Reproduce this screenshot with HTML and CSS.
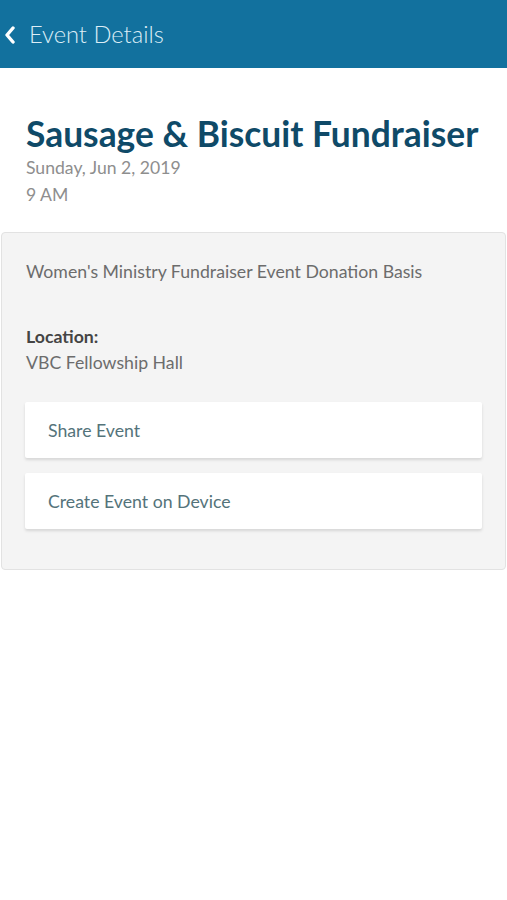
FILE: index.html
```html
<!DOCTYPE html>
<html>
<head>
<meta charset="utf-8">
<link rel="stylesheet" href="styles.css">
</head>
<body>
<header class="topbar">
  <svg class="back" width="12" height="18" viewBox="0 0 12 18"><path d="M9 2 L3 9 L9 16" fill="none" stroke="#ffffff" stroke-width="3.4" stroke-linecap="round" stroke-linejoin="round"/></svg>
  <span class="topbar-title">Event Details</span>
</header>
<section class="intro">
  <h1 class="title">Sausage &amp; Biscuit Fundraiser</h1>
  <div class="meta">Sunday, Jun 2, 2019</div>
  <div class="meta">9 AM</div>
</section>
<section class="card">
  <p class="desc">Women's Ministry Fundraiser Event Donation Basis</p>
  <div class="loc-label">Location:</div>
  <div class="loc">VBC Fellowship Hall</div>
  <div class="actions">
    <div class="action">Share Event</div>
    <div class="action">Create Event on Device</div>
  </div>
</section>
</body>
</html>
```
FILE: styles.css
```css
html, body {
  margin: 0;
  padding: 0;
  background: #ffffff;
  font-family: Lato, "Open Sans", sans-serif;
}
.topbar {
  height: 68px;
  background: #12719e;
  display: flex;
  align-items: center;
  padding-left: 4px;
  gap: 13px;
  box-sizing: border-box;
}
.back {
  display: block;
  margin-top: 2px;
}
.topbar-title {
  color: #dcedf6;
  font-size: 23.7px;
  font-weight: 300;
}
.intro {
  padding: 46px 26px 0 26px;
}
.title {
  margin: 0;
  font-size: 35.4px;
  font-weight: 700;
  color: #0f4a68;
  line-height: 40px;
}
.meta {
  font-size: 17.6px;
  color: #8e8e8e;
  line-height: 27px;
  font-weight: 400;
}
.card {
  margin: 24px 1px 0 1px;
  background: #f4f4f4;
  border: 1px solid #e2e2e2;
  border-radius: 4px;
  padding: 27px 23px 40px 23px;
}
.desc {
  margin: 0;
  padding-left: 1px;
  font-size: 17.7px;
  color: #6c6c6c;
  line-height: 24px;
}
.loc-label {
  margin-top: 40px;
  padding-left: 1px;
  font-size: 17.7px;
  font-weight: 700;
  color: #444444;
  line-height: 26px;
}
.loc {
  padding-left: 1px;
  font-size: 17.7px;
  color: #6c6c6c;
  line-height: 26px;
}
.actions {
  margin-top: 26px;
  display: flex;
  flex-direction: column;
  gap: 15px;
}
.action {
  height: 56px;
  background: #ffffff;
  border-radius: 2px;
  box-shadow: 0 2px 3px rgba(0,0,0,0.12);
  display: flex;
  align-items: center;
  padding-left: 23px;
  font-size: 17.7px;
  color: #54737a;
}
```
